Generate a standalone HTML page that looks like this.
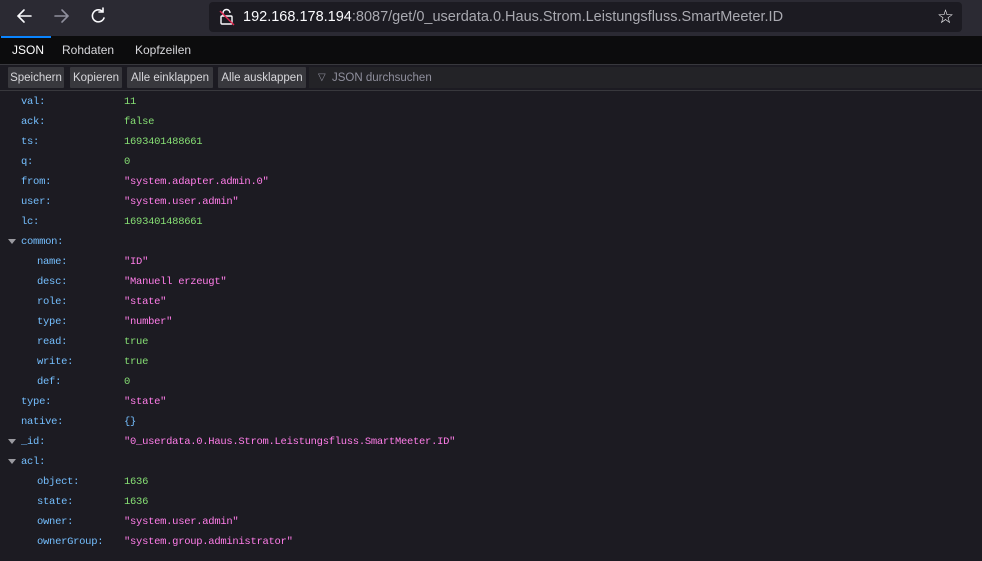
<!DOCTYPE html>
<html><head><meta charset="utf-8"><style>
body{margin:0;width:982px;height:561px;overflow:hidden;background:#1c1b22;font-family:"Liberation Sans",sans-serif}
.top{position:absolute;left:0;top:0;width:982px;height:36px;background:#2b2a33}
.url{position:absolute;left:209px;top:2px;width:753px;height:30px;background:#1c1b22;border-radius:4px;color:#fbfbfe;font-size:14.5px;line-height:30px}
.url span{color:#a9a9b0}
.tabs{position:absolute;left:0;top:36px;width:982px;height:28px;background:#0c0c0d;border-bottom:1px solid #38383d}
.tab{position:absolute;top:0;height:28px;line-height:29px;font-size:12px;color:#d7d7db}
.bar{position:absolute;left:0;top:65px;width:982px;height:25px;background:#1c1b22;border-bottom:1px solid #38383d}
.btn{position:absolute;top:2px;height:21px;line-height:22px;background:#38383d;color:#d7d7db;font-size:11.5px;text-align:center;border-radius:1px}
.row{position:absolute;height:20px;line-height:20px;font-family:"Liberation Mono",monospace;font-size:10.5px;letter-spacing:-0.28px;margin-top:2px}
.k{color:#75bfff}.s{color:#ff7de9}.n{color:#86de74}
.tw{position:absolute;left:8px;width:0;height:0;border-left:4px solid transparent;border-right:4px solid transparent;border-top:5px solid #9a9aa0;margin-top:1px}
</style></head><body>
<div class="top">
<svg width="200" height="36" style="position:absolute;left:0;top:0" fill="none" stroke-width="1.6" stroke-linecap="round">
<path d="M31 16H18M24 10l-6 6 6 6" stroke="#fbfbfe"/>
<path d="M55 16h13M62 10l6 6-6 6" stroke="#8f8f9d"/>
<path d="M103 12a6 6 0 1 0 1 6M103 8v4h-4" stroke="#fbfbfe"/>
</svg>
<div class="url"><svg width="20" height="20" style="position:absolute;left:8px;top:5px" fill="none" stroke-width="1.4"><rect x="4" y="9" width="11" height="8" rx="1" stroke="#fbfbfe"/><path d="M6 9V6a3.5 3.5 0 0 1 7 0" stroke="#fbfbfe"/><path d="M3 4l14 14" stroke="#e22850"/></svg><div style="position:absolute;left:34px;top:0">192.168.178.194<span>:8087/get/0_userdata.0.Haus.Strom.Leistungsfluss.SmartMeeter.ID</span></div></div>
<div style="position:absolute;left:937px;top:6px;color:#fbfbfe;font-size:19px">☆</div>
</div>
<div class="tabs">
<div style="position:absolute;left:1px;top:0;width:50px;height:2px;background:#0a84ff"></div>
<div class="tab" style="left:12px;color:#fff">JSON</div>
<div class="tab" style="left:62px">Rohdaten</div>
<div class="tab" style="left:135px">Kopfzeilen</div>
</div>
<div class="bar">
<div class="btn" style="left:8px;width:56px">Speichern</div>
<div class="btn" style="left:70px;width:52px">Kopieren</div>
<div class="btn" style="left:127px;width:86px">Alle einklappen</div>
<div class="btn" style="left:218px;width:88px">Alle ausklappen</div>
<div style="position:absolute;left:309px;top:2px;width:673px;height:21px;background:#232327;color:#8f8f9d;font-size:11.5px;line-height:22px;padding-left:23px;box-sizing:border-box">JSON durchsuchen</div>
<div style="position:absolute;left:318px;top:7px;color:#8f8f9d;font-size:10px">▽</div>
</div>
<div class="row" style="top:90px;left:21px"><span class="k">val:</span></div><div class="row n" style="top:90px;left:124px">11</div>
<div class="row" style="top:110px;left:21px"><span class="k">ack:</span></div><div class="row n" style="top:110px;left:124px">false</div>
<div class="row" style="top:130px;left:21px"><span class="k">ts:</span></div><div class="row n" style="top:130px;left:124px">1693401488661</div>
<div class="row" style="top:150px;left:21px"><span class="k">q:</span></div><div class="row n" style="top:150px;left:124px">0</div>
<div class="row" style="top:170px;left:21px"><span class="k">from:</span></div><div class="row s" style="top:170px;left:124px">"system.adapter.admin.0"</div>
<div class="row" style="top:190px;left:21px"><span class="k">user:</span></div><div class="row s" style="top:190px;left:124px">"system.user.admin"</div>
<div class="row" style="top:210px;left:21px"><span class="k">lc:</span></div><div class="row n" style="top:210px;left:124px">1693401488661</div>
<div class="tw" style="top:238px"></div><div class="row" style="top:230px;left:21px"><span class="k">common:</span></div>
<div class="row" style="top:250px;left:37px"><span class="k">name:</span></div><div class="row s" style="top:250px;left:124px">"ID"</div>
<div class="row" style="top:270px;left:37px"><span class="k">desc:</span></div><div class="row s" style="top:270px;left:124px">"Manuell erzeugt"</div>
<div class="row" style="top:290px;left:37px"><span class="k">role:</span></div><div class="row s" style="top:290px;left:124px">"state"</div>
<div class="row" style="top:310px;left:37px"><span class="k">type:</span></div><div class="row s" style="top:310px;left:124px">"number"</div>
<div class="row" style="top:330px;left:37px"><span class="k">read:</span></div><div class="row n" style="top:330px;left:124px">true</div>
<div class="row" style="top:350px;left:37px"><span class="k">write:</span></div><div class="row n" style="top:350px;left:124px">true</div>
<div class="row" style="top:370px;left:37px"><span class="k">def:</span></div><div class="row n" style="top:370px;left:124px">0</div>
<div class="row" style="top:390px;left:21px"><span class="k">type:</span></div><div class="row s" style="top:390px;left:124px">"state"</div>
<div class="row" style="top:410px;left:21px"><span class="k">native:</span></div><div class="row" style="top:410px;left:124px;color:#75bfff">{}</div>
<div class="tw" style="top:438px"></div><div class="row" style="top:430px;left:21px"><span class="k">_id:</span></div><div class="row s" style="top:430px;left:124px">"0_userdata.0.Haus.Strom.Leistungsfluss.SmartMeeter.ID"</div>
<div class="tw" style="top:458px"></div><div class="row" style="top:450px;left:21px"><span class="k">acl:</span></div>
<div class="row" style="top:470px;left:37px"><span class="k">object:</span></div><div class="row n" style="top:470px;left:124px">1636</div>
<div class="row" style="top:490px;left:37px"><span class="k">state:</span></div><div class="row n" style="top:490px;left:124px">1636</div>
<div class="row" style="top:510px;left:37px"><span class="k">owner:</span></div><div class="row s" style="top:510px;left:124px">"system.user.admin"</div>
<div class="row" style="top:530px;left:37px"><span class="k">ownerGroup:</span></div><div class="row s" style="top:530px;left:124px">"system.group.administrator"</div>
</body></html>
